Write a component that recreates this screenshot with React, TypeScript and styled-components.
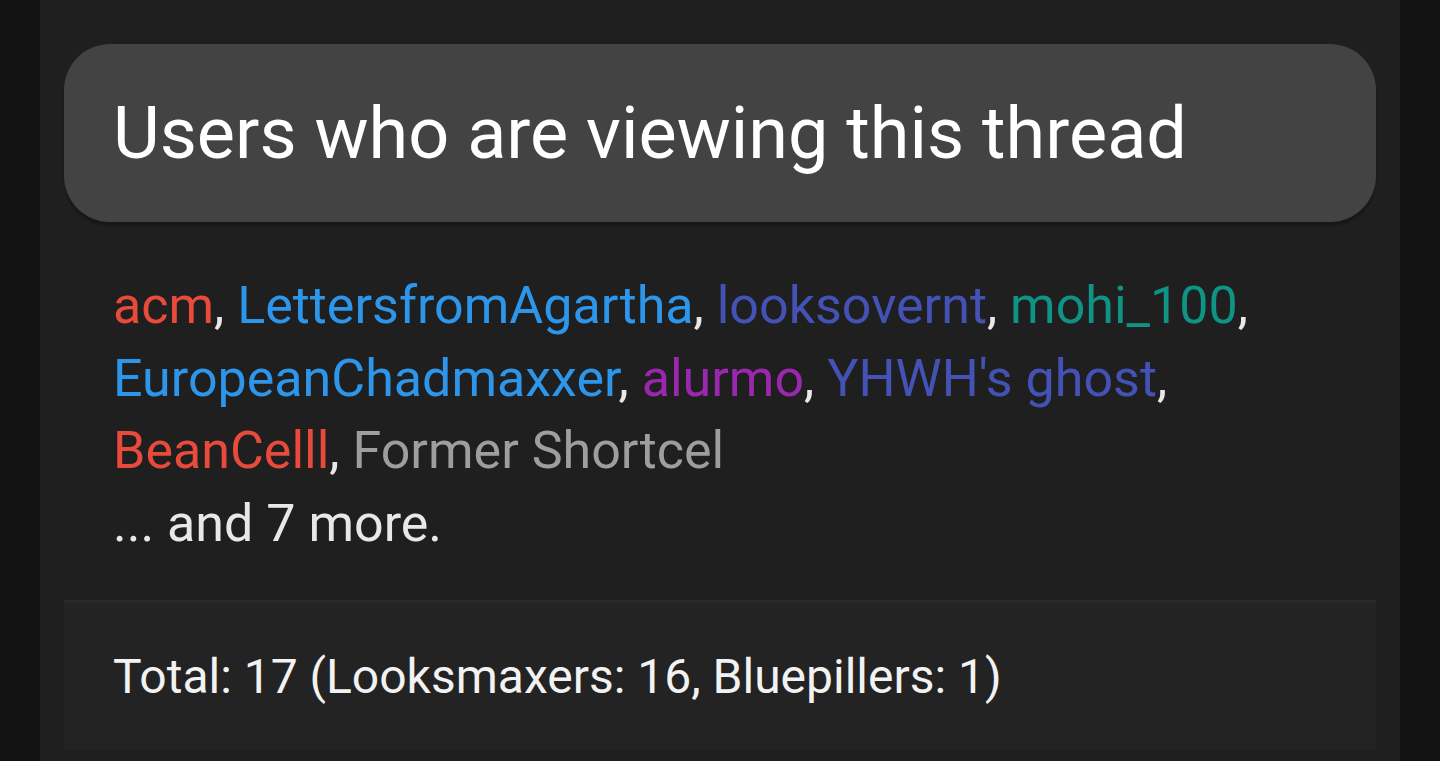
import styled, { createGlobalStyle } from 'styled-components';

const GlobalStyle = createGlobalStyle`
  html, body {
    margin: 0;
    padding: 0;
    background: #121212;
    font-family: Roboto, 'Noto Sans', sans-serif;
  }
`;

const users = [
  { name: 'acm', color: '#e84a3c' },
  { name: 'LettersfromAgartha', color: '#2d96ea' },
  { name: 'looksovernt', color: '#4352b4' },
  { name: 'mohi_100', color: '#0f9385' },
  { name: 'EuropeanChadmaxxer', color: '#2d96ea' },
  { name: 'alurmo', color: '#9a27ad' },
  { name: "YHWH's ghost", color: '#4352b4' },
  { name: 'BeanCelll', color: '#e84a3c' },
  { name: 'Former Shortcel', color: '#9e9e9e' },
];

export default function App() {
  return (
    <Page>
      <GlobalStyle />
      <Column>
        <Header>
          <Title>Users who are viewing this thread</Title>
        </Header>
        <UserList>
          {users.map((u, i) => (
            <span key={u.name}>
              <UserName $color={u.color}>{u.name}</UserName>
              {i < users.length - 1 && ', '}
              {(i === 3 || i === 6) && <br />}
            </span>
          ))}
          <br />
          ... and 7 more.
        </UserList>
        <Footer>Total: 17 (Looksmaxers: 16, Bluepillers: 1)</Footer>
      </Column>
    </Page>
  );
}

const Page = styled.div`
  display: flex;
  justify-content: center;
  min-height: 761px;
  background: #121212;
`;

const Column = styled.div`
  width: 1360px;
  background: #1f1f1f;
  padding: 44px 24px 11px;
  box-sizing: border-box;
  display: flex;
  flex-direction: column;
`;

const Header = styled.div`
  background: #434343;
  border-radius: 46px;
  height: 178px;
  padding: 0 49px;
  display: flex;
  align-items: center;
  box-shadow: 0 4px 2px rgba(0, 0, 0, 0.25);
`;

const Title = styled.h3`
  margin: 0;
  font-size: 72px;
  font-weight: 400;
  color: #ffffff;
`;

const UserList = styled.div`
  padding: 48px 49px 40px;
  font-size: 52px;
  line-height: 72.5px;
  color: #e8e8e8;
`;

const UserName = styled.span<{ $color: string }>`
  color: ${(p) => p.$color};
`;

const Footer = styled.div`
  background: #232323;
  border-top: 3px solid #292929;
  height: 150px;
  box-sizing: border-box;
  padding: 0 49px;
  display: flex;
  align-items: center;
  font-size: 48px;
  color: #f2f2f2;
`;
